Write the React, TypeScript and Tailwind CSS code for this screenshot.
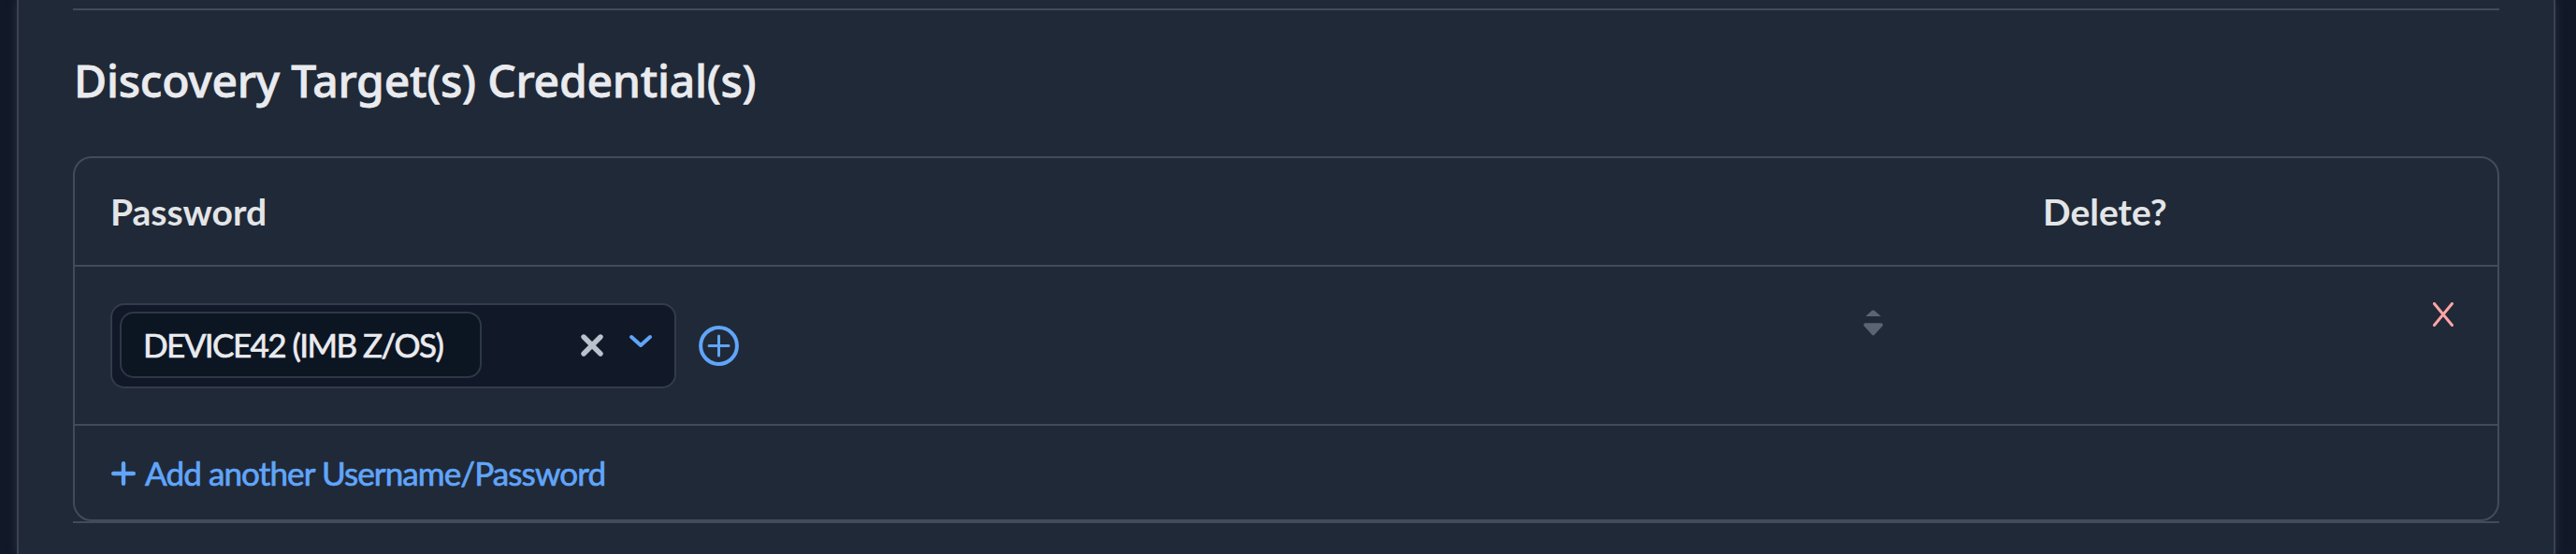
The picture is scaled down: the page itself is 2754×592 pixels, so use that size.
import type { ReactNode } from "react";

type IconProps = { className?: string };

function CloseIcon({ className }: IconProps) {
  return (
    <svg width="26" height="26" viewBox="0 0 26 26" className={className} fill="none">
      <path d="M4 4L22 22M22 4L4 22" stroke="currentColor" strokeWidth="5.4" strokeLinecap="round" />
    </svg>
  );
}

function ChevronIcon({ className }: IconProps) {
  return (
    <svg width="26" height="16" viewBox="0 0 26 16" className={className} fill="none">
      <path
        d="M3 3L13 12L23 3"
        stroke="currentColor"
        strokeWidth="4"
        strokeLinecap="round"
        strokeLinejoin="round"
      />
    </svg>
  );
}

function PlusCircleIcon({ className }: IconProps) {
  return (
    <svg width="43" height="43" viewBox="0 0 43 43" className={className} fill="none" stroke="currentColor">
      <circle cx="21.5" cy="21.5" r="19.4" strokeWidth="4" />
      <path d="M21.5 11V32M11 21.5H32" strokeWidth="3" strokeLinecap="round" />
    </svg>
  );
}

function SortIcon({ className }: IconProps) {
  return (
    <svg width="22" height="28" viewBox="0 0 22 28" className={className} fill="currentColor">
      <path d="M2.5 7L9.4 0.8Q10.6 0 11.8 0.8L19 7Z" />
      <path d="M2 14.2H19.5Q21.5 14.8 20.8 17L12 26.8Q10.7 28 9.4 26.8L0.6 17Q-0.2 14.8 2 14.2Z" />
    </svg>
  );
}

function DeleteIcon({ className }: IconProps) {
  return (
    <svg width="22" height="26" viewBox="0 0 22 26" className={className} fill="none">
      <path d="M1.5 1.5L20.5 24.5M20.5 1.5L1.5 24.5" stroke="currentColor" strokeWidth="3" strokeLinecap="round" />
    </svg>
  );
}

function PlusIcon({ className }: IconProps) {
  return (
    <svg width="26" height="26" viewBox="0 0 26 26" className={className} fill="none">
      <path d="M13 2.2V23.8M2.2 13H23.8" stroke="currentColor" strokeWidth="4.4" strokeLinecap="round" />
    </svg>
  );
}

function HeaderCell({ className, children }: { className?: string; children: ReactNode }) {
  return (
    <div className={`text-[39px] leading-[46px] font-bold whitespace-nowrap text-[#e3e5e7] ${className ?? ""}`}>
      {children}
    </div>
  );
}

export default function App() {
  return (
    <div className="h-[592px] overflow-hidden bg-[#111827] pr-[22px] pl-[18px] font-['Lato',sans-serif]">
      <section className="h-full border-x-2 border-[#3c4350] bg-[#202937] px-[58px] pt-[9px] shadow-[0_0_10px_rgba(75,80,95,0.45)]">
        <hr className="border-t-2 border-[#424b58]" />

        <h2 className="mt-[43px] h-[65px] pl-px font-['Noto_Sans',sans-serif] text-[48px] leading-[64px] font-medium tracking-[-0.2px] whitespace-nowrap text-[#eaebef] [-webkit-text-stroke:0.8px_#eaebef]">
          Discovery Target(s) Credential(s)
        </h2>

        <div className="mt-[48px] h-[390px] rounded-[20px] border-2 border-[#424b58]">
          {/* Header */}
          <div className="flex h-[116px] items-center border-b-2 border-[#424b58] pl-[38px]">
            <HeaderCell className="w-[2066px]">Password</HeaderCell>
            <HeaderCell>Delete?</HeaderCell>
          </div>

          {/* Credential row */}
          <div className="flex h-[170px] items-start border-b-2 border-[#424b58] pl-[38px]">
            <div className="mt-[39px] flex h-[91px] w-[605px] rounded-[15px] border-2 border-[#343c49] bg-[#111827] pt-[7px] pl-[8px]">
              <div className="flex h-[71px] w-[387px] items-center rounded-[15px] border-2 border-[#2d3845] bg-[#0c1522] pb-[2px] pl-[23px] text-[35px] leading-[40px] tracking-[-1.55px] whitespace-nowrap text-[#eaebef] [-webkit-text-stroke:0.7px_#eaebef]">
                DEVICE42 (IMB Z/OS)
              </div>
              <CloseIcon className="mt-[23px] ml-[105px] text-[#bac2ce]" />
              <ChevronIcon className="mt-[24px] ml-[26px] text-[#60a5fa]" />
            </div>
            <PlusCircleIcon className="mt-[63px] ml-[24px] text-[#60a5fa]" />
            <SortIcon className="mt-[46px] ml-[1202px] text-[#5b6472]" />
            <DeleteIcon className="mt-[38px] ml-[587px] text-[#fca5a5]" />
          </div>

          {/* Add link */}
          <a className="flex h-[100px] items-center pl-[39px] text-[35px] leading-[40px] tracking-[-0.88px] whitespace-nowrap text-[#60a5fa] [-webkit-text-stroke:0.7px_#60a5fa]">
            <PlusIcon className="mt-[2px] mr-[10px]" />
            Add another Username/Password
          </a>
        </div>

        <hr className="border-t-2 border-[#424b58]" />
      </section>
    </div>
  );
}
